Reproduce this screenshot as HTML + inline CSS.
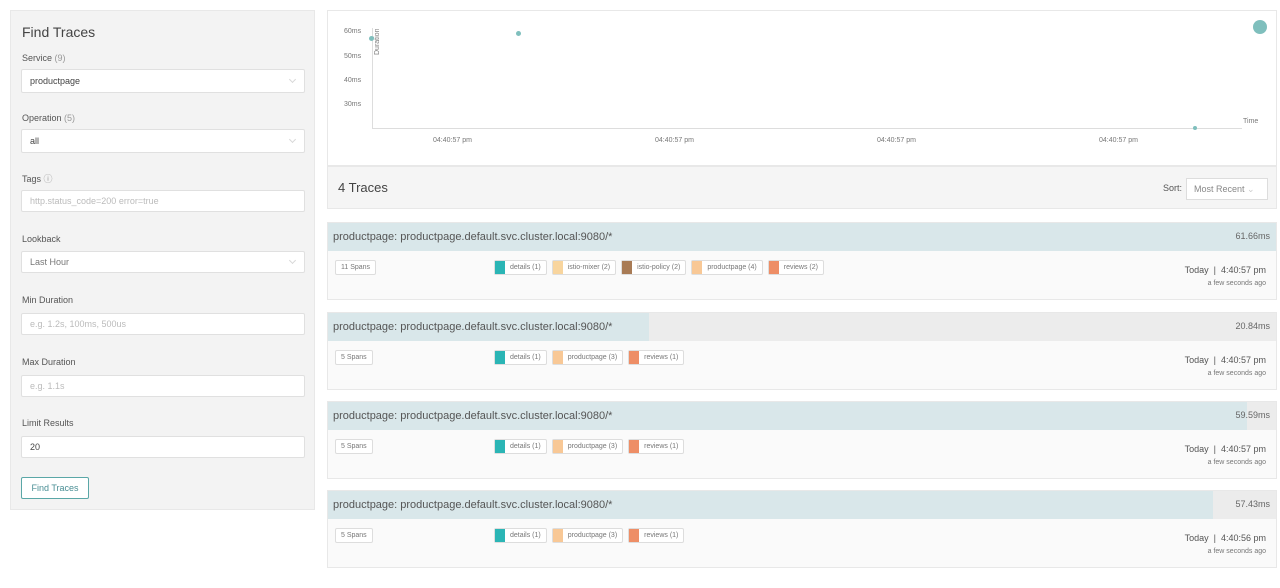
<!DOCTYPE html>
<html><head><style>
*{box-sizing:border-box;margin:0;padding:0}
body{width:1280px;height:588px;background:#fff;font-family:"Liberation Sans",sans-serif;color:#555;position:relative;overflow:hidden}
.abs{position:absolute}
.left{left:10px;top:10px;width:305px;height:500px;background:#f3f3f3;border:1px solid #e8e8e8}
.lbl{position:absolute;left:11px;font-size:9px;color:#555}
.lbl span{color:#999}
.inp{position:absolute;left:10px;width:284px;height:24px;background:#fff;border:1px solid #e0e0e0;border-radius:2px;font-size:9px;padding-left:8px;line-height:22px;color:#444}
.inp.ph{color:#bbb}
.chev{position:absolute;right:9px;top:7px;width:5px;height:5px;border-right:1px solid #d8d8d8;border-bottom:1px solid #d8d8d8;transform:rotate(45deg)}
.chart{left:327px;top:10px;width:950px;height:156px;border:1px solid #e8e8e8;background:#fff}
.ax{font-size:7px;color:#777;position:absolute}
.hdr{left:327px;top:166px;width:950px;height:43px;background:#f5f5f5;border:1px solid #e8e8e8}
.card{position:absolute;left:327px;width:950px;height:78px;border:1px solid #e8e8e8;background:#fafafa}
.bar{position:absolute;left:0;top:0;height:28px;background:#ececec;width:100%}
.bar i{position:absolute;left:0;top:0;bottom:0;background:#d9e7ea}
.title{position:absolute;left:5px;top:8px;font-size:11px;color:#555}
.dur{position:absolute;right:6px;top:8px;font-size:9px;color:#666}
.spans{position:absolute;left:7px;top:37px;height:15px;border:1px solid #ddd;background:#fff;font-size:7px;line-height:13px;padding:0 5px;color:#777;border-radius:2px}
.tags{position:absolute;left:166px;top:37px;display:flex;gap:5px}
.tag{height:15px;border:1px solid #ddd;background:#fff;font-size:7px;line-height:13px;color:#777;display:flex;border-radius:2px}
.tag b{width:10px;display:block}
.tag span{padding:0 5px}
.time{position:absolute;right:10px;top:42px;font-size:9px;color:#555;text-align:right}
.time div{font-size:7px;color:#777;margin-top:5px}
.dot{position:absolute;border-radius:50%;background:#7fbfbd}
</style></head><body>
<div class="abs left">
<div class="abs" style="left:11px;top:13px;font-size:14px;color:#444">Find Traces</div>
<div class="lbl" style="top:42px">Service <span>(9)</span></div>
<div class="inp" style="top:58px">productpage<i class="chev"></i></div>
<div class="lbl" style="top:102px">Operation <span>(5)</span></div>
<div class="inp" style="top:118px">all<i class="chev"></i></div>
<div class="lbl" style="top:161px">Tags <span>ⓘ</span></div>
<div class="inp ph" style="top:179px;height:22px;line-height:20px">http.status_code=200 error=true</div>
<div class="lbl" style="top:223px">Lookback</div>
<div class="inp" style="top:240px;height:22px;line-height:20px;color:#777">Last Hour<i class="chev" style="top:6px"></i></div>
<div class="lbl" style="top:284px">Min Duration</div>
<div class="inp ph" style="top:302px;height:22px;line-height:20px">e.g. 1.2s, 100ms, 500us</div>
<div class="lbl" style="top:346px">Max Duration</div>
<div class="inp ph" style="top:364px;height:22px;line-height:20px">e.g. 1.1s</div>
<div class="lbl" style="top:407px">Limit Results</div>
<div class="inp" style="top:425px;height:22px;line-height:20px">20</div>
<div class="abs" style="left:10px;top:466px;width:68px;height:22px;border:1px solid #5aa7a7;border-radius:2px;font-size:9px;line-height:20px;text-align:center;color:#4a8f95;background:#fff">Find Traces</div>
</div>

<div class="abs chart">
<div class="abs" style="left:44px;top:17px;width:1px;height:101px;background:#ddd"></div>
<div class="abs" style="left:44px;top:117px;width:870px;height:1px;background:#ddd"></div>
<div class="ax" style="left:16px;top:17px">60ms</div>
<div class="ax" style="left:16px;top:42px">50ms</div>
<div class="ax" style="left:16px;top:66px">40ms</div>
<div class="ax" style="left:16px;top:90px">30ms</div>
<div class="ax" style="left:46px;transform:rotate(-90deg);transform-origin:left top;top:44px">Duration</div>
<div class="ax" style="left:105px;top:126px">04:40:57 pm</div>
<div class="ax" style="left:327px;top:126px">04:40:57 pm</div>
<div class="ax" style="left:549px;top:126px">04:40:57 pm</div>
<div class="ax" style="left:771px;top:126px">04:40:57 pm</div>
<div class="ax" style="left:915px;top:107px">Time</div>
<div class="dot" style="left:41px;top:25px;width:5px;height:5px"></div>
<div class="dot" style="left:188px;top:20px;width:5px;height:5px"></div>
<div class="dot" style="left:865px;top:115px;width:4px;height:4px"></div>
<div class="dot" style="left:925px;top:9px;width:14px;height:14px"></div>
</div>

<div class="abs hdr">
<div class="abs" style="left:10px;top:13px;font-size:13px;color:#444">4 Traces</div>
<div class="abs" style="left:835px;top:16px;font-size:9px;color:#555">Sort:</div>
<div class="abs" style="left:858px;top:11px;width:82px;height:22px;border:1px solid #ddd;background:#fff;font-size:9px;line-height:20px;padding-left:7px;color:#888">Most Recent <span style="color:#ccc">⌄</span></div>
</div>

<div class="card" style="top:222px"><div class="bar"><i style="width:100%"></i></div>
<div class="title">productpage: productpage.default.svc.cluster.local:9080/*</div><div class="dur">61.66ms</div>
<div class="spans">11 Spans</div>
<div class="tags">
<div class="tag"><b style="background:#2bb5b5"></b><span>details (1)</span></div>
<div class="tag"><b style="background:#f8d59e"></b><span>istio-mixer (2)</span></div>
<div class="tag"><b style="background:#a87b55"></b><span>istio-policy (2)</span></div>
<div class="tag"><b style="background:#f8c896"></b><span>productpage (4)</span></div>
<div class="tag"><b style="background:#ee8e66"></b><span>reviews (2)</span></div>
</div>
<div class="time">Today &nbsp;|&nbsp; 4:40:57 pm<div>a few seconds ago</div></div></div>

<div class="card" style="top:312px"><div class="bar"><i style="width:321px"></i></div>
<div class="title">productpage: productpage.default.svc.cluster.local:9080/*</div><div class="dur">20.84ms</div>
<div class="spans">5 Spans</div>
<div class="tags">
<div class="tag"><b style="background:#2bb5b5"></b><span>details (1)</span></div>
<div class="tag"><b style="background:#f8c896"></b><span>productpage (3)</span></div>
<div class="tag"><b style="background:#ee8e66"></b><span>reviews (1)</span></div>
</div>
<div class="time">Today &nbsp;|&nbsp; 4:40:57 pm<div>a few seconds ago</div></div></div>

<div class="card" style="top:401px"><div class="bar"><i style="width:919px"></i></div>
<div class="title">productpage: productpage.default.svc.cluster.local:9080/*</div><div class="dur">59.59ms</div>
<div class="spans">5 Spans</div>
<div class="tags">
<div class="tag"><b style="background:#2bb5b5"></b><span>details (1)</span></div>
<div class="tag"><b style="background:#f8c896"></b><span>productpage (3)</span></div>
<div class="tag"><b style="background:#ee8e66"></b><span>reviews (1)</span></div>
</div>
<div class="time">Today &nbsp;|&nbsp; 4:40:57 pm<div>a few seconds ago</div></div></div>

<div class="card" style="top:490px"><div class="bar"><i style="width:885px"></i></div>
<div class="title">productpage: productpage.default.svc.cluster.local:9080/*</div><div class="dur">57.43ms</div>
<div class="spans">5 Spans</div>
<div class="tags">
<div class="tag"><b style="background:#2bb5b5"></b><span>details (1)</span></div>
<div class="tag"><b style="background:#f8c896"></b><span>productpage (3)</span></div>
<div class="tag"><b style="background:#ee8e66"></b><span>reviews (1)</span></div>
</div>
<div class="time">Today &nbsp;|&nbsp; 4:40:56 pm<div>a few seconds ago</div></div></div>
</body></html>
